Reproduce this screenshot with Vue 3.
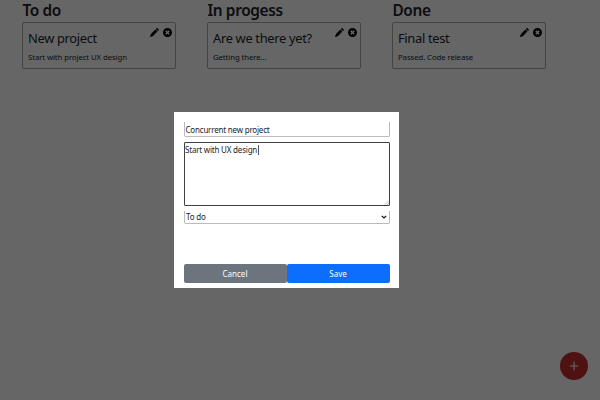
<script setup>
import { ref } from 'vue'

const columns = [
  { title: 'To do', cards: [{ title: 'New project', text: 'Start with project UX design' }] },
  { title: 'In progess', cards: [{ title: 'Are we there yet?', text: 'Getting there...' }] },
  { title: 'Done', cards: [{ title: 'Final test', text: 'Passed. Code release' }] },
]
const title = ref('Concurrent new project')
const description = ref('Start with UX design')
const status = ref('To do')
</script>

<template>
  <div class="page">
    <main class="board">
      <section v-for="col in columns" :key="col.title" class="column">
        <h2>{{ col.title }}</h2>
        <article v-for="card in col.cards" :key="card.title" class="card">
          <div class="card-head">
            <h3>{{ card.title }}</h3>
            <div class="actions">
              <svg class="pencil" viewBox="0 0 16 16"><path d="M12.9.2a.5.5 0 0 0-.7 0l-1.7 1.7 3.6 3.6 1.7-1.7a.5.5 0 0 0 0-.7zM9.6 2.8 1.8 10.6.2 15.1a.6.6 0 0 0 .8.8l4.4-1.7 7.8-7.8z" /></svg>
              <svg class="remove" viewBox="0 0 16 16"><path fill-rule="evenodd" d="M8 0a8 8 0 1 0 0 16A8 8 0 0 0 8 0zM4.1 5.9 5.9 4.1 8 6.2l2.1-2.1 1.8 1.8L9.8 8l2.1 2.1-1.8 1.8L8 9.8l-2.1 2.1-1.8-1.8L6.2 8z" /></svg>
            </div>
          </div>
          <p>{{ card.text }}</p>
        </article>
      </section>
    </main>
    <button class="add" aria-label="Add"><svg viewBox="0 0 10 10"><path d="M5 .8v8.4M.8 5h8.4" /></svg></button>
    <div class="overlay">
      <form class="modal" @submit.prevent>
        <div class="field name">{{ title }}</div>
        <div class="field area">
          <span>{{ description }}</span><i class="caret"></i>
          <svg class="grip" viewBox="0 0 5 5"><path d="M.5 5 5 .5M3 5l2-2" /></svg>
        </div>
        <div class="field select">
          <span>{{ status }}</span>
          <svg viewBox="0 0 6 4"><path d="M.8.8 3 3 5.2.8" /></svg>
        </div>
        <div class="buttons">
          <button type="button" class="cancel">Cancel</button>
          <button type="submit" class="save">Save</button>
        </div>
      </form>
    </div>
  </div>
</template>

<style>
body { background: #fff; overflow: hidden; }
</style>

<style scoped>
* { box-sizing: border-box; margin: 0; }
.page {
  position: relative;
  height: 400px;
  overflow: hidden;
  color: #212529;
  font-family: "Noto Sans", "Open Sans", sans-serif;
}
.board { display: flex; gap: 31px; padding-left: 22.4px; }
.column { width: 154px; }
h2 { height: 22px; font-size: 15.4px; line-height: 21px; font-weight: 600; white-space: nowrap; letter-spacing: -0.35px; }
.card { height: 47px; padding: 6px 3px 0 4.6px; border: 1px solid #a8a8a8; border-radius: 2px; }
.card-head { display: flex; justify-content: space-between; height: 22px; }
h3 { font-size: 12.9px; line-height: 19px; font-weight: 400; white-space: nowrap; letter-spacing: -0.33px; }
.actions { display: flex; gap: 4px; }
.actions svg { fill: #000; }
.pencil { width: 9px; height: 9px; margin-top: -1px; }
.remove { width: 9px; height: 9px; margin-top: -1px; }
.card p { font-size: 7.8px; line-height: 13px; white-space: nowrap; letter-spacing: -0.1px; }
.add {
  position: absolute;
  left: 560px;
  top: 352px;
  width: 28px;
  height: 28px;
  border: 0;
  padding: 0;
  border-radius: 50%;
  background: #c62d2d;
  display: grid;
  place-items: center;
}
.add svg { width: 10px; height: 10px; fill: none; stroke: #fff; stroke-width: 1.2; }
.overlay {
  position: absolute;
  inset: 0;
  background: rgba(0, 0, 0, 0.6);
  padding: 112px 0 0 174px;
}
.modal { width: 225px; height: 175.5px; padding: 10px 9.5px 0; background: #fff; font-size: 8px; letter-spacing: -0.2px; }
.field { border: 1px solid #bbb; white-space: nowrap; }
.name { height: 15px; border-top: 0; border-radius: 0 0 2px 2px; padding-left: 1px; line-height: 15px; }
.area {
  position: relative;
  display: flex;
  align-items: flex-start;
  height: 64px;
  margin-top: 5px;
  padding-left: 0.5px;
  border-color: #443f47;
  border-radius: 1px;
  line-height: 14px;
}
.caret { width: 1px; height: 10px; margin: 2px 0 0 1px; background: #555; }
.grip { position: absolute; right: 0; bottom: 0; width: 5px; height: 5px; stroke: #777; stroke-width: 0.5; }
.select { display: flex; align-items: center; justify-content: space-between; height: 13px; margin-top: 5px; border-top: 0; border-radius: 0 0 2px 2px; padding: 0 2px 0 1.5px; line-height: 12px; }
.select svg { width: 6px; height: 4px; fill: none; stroke: #111; stroke-width: 1.2; }
.buttons { display: flex; margin-top: 39.5px; }
.buttons button {
  flex: 1;
  height: 19px;
  padding: 0;
  border: 0;
  border-radius: 2px;
  color: #fff;
  font: 8px/19px "Noto Sans", "Open Sans", sans-serif;
  letter-spacing: 0;
}
.cancel { background: #6c757d; }
.buttons .save { background: #0d6efd; }
</style>
